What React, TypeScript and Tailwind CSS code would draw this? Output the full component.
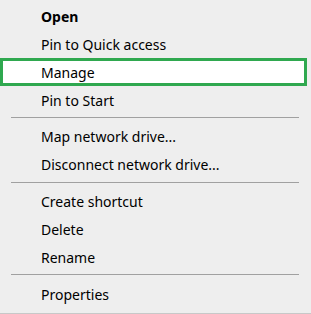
import React from "react";

function Item({ label, bold, selected }: { label: string; bold?: boolean; selected?: boolean }) {
  return (
    <div
      className={
        "h-[28px] flex items-center text-[14px] text-black " +
        (bold ? "font-bold " : "") +
        (selected ? "border-[3px] border-[#2fa84f] bg-white pl-[38px] mr-[4px]" : "pl-[41px]")
      }
    >
      {label}
    </div>
  );
}

function Sep({ top, bottom }: { top: string; bottom: string }) {
  return (
    <div className={top + " " + bottom + " pl-[11px] pr-[12px]"}>
      <div className="h-px bg-[#a0a0a0]" />
    </div>
  );
}

export default function App() {
  return (
    <div
      className="w-[311px] h-[314px] bg-[#eeeeee] pt-[2px] flex flex-col border-b border-[#c8c8c8]"
      style={{ fontFamily: '"Noto Sans", "Open Sans", sans-serif' }}
    >
      <Item label="Open" bold />
      <Item label="Pin to Quick access" />
      <Item label="Manage" selected />
      <Item label="Pin to Start" />
      <Sep top="pt-[3px]" bottom="pb-[4px]" />
      <Item label="Map network drive..." />
      <Item label="Disconnect network drive..." />
      <Sep top="pt-[4px]" bottom="pb-[4px]" />
      <Item label="Create shortcut" />
      <Item label="Delete" />
      <Item label="Rename" />
      <Sep top="pt-[3px]" bottom="pb-[5px]" />
      <Item label="Properties" />
    </div>
  );
}
